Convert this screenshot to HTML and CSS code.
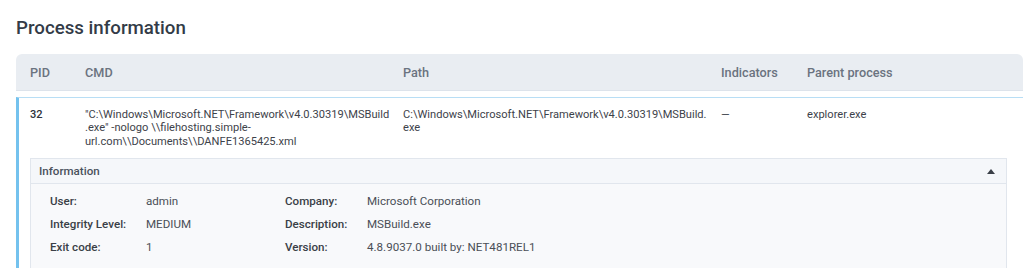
FILE: index.html
```html
<!DOCTYPE html>
<html lang="en">
<head>
  <meta charset="UTF-8">
  <title>Process information</title>
  <link rel="stylesheet" href="styles.css">
</head>
<body>

<h2 class="title">Process information</h2>

<div class="table">
  <div class="thead">
    <div class="cell">PID</div>
    <div class="cell">CMD</div>
    <div class="cell">Path</div>
    <div class="cell">Indicators</div>
    <div class="cell">Parent process</div>
  </div>

  <div class="row">
    <div class="cells">
      <div class="cell pid">32</div>
      <div class="cell">"C:\Windows\Microsoft.NET\Framework\v4.0.30319\MSBuild.exe" -nologo \\filehosting.simple-url.com\\Documents\\DANFE1365425.xml</div>
      <div class="cell">C:\Windows\Microsoft.NET\Framework\v4.0.30319\MSBuild.exe</div>
      <div class="cell">&mdash;</div>
      <div class="cell">explorer.exe</div>
    </div>

    <div class="info">
      <div class="info-head">
        <span>Information</span>
        <span class="caret"></span>
      </div>
      <div class="info-body">
        <div class="label">User:</div>
        <div class="value">admin</div>
        <div class="label">Company:</div>
        <div class="value">Microsoft Corporation</div>

        <div class="label">Integrity Level:</div>
        <div class="value">MEDIUM</div>
        <div class="label">Description:</div>
        <div class="value">MSBuild.exe</div>

        <div class="label">Exit code:</div>
        <div class="value">1</div>
        <div class="label">Version:</div>
        <div class="value">4.8.9037.0 built by: NET481REL1</div>
      </div>
    </div>
  </div>
</div>

</body>
</html>
```

FILE: styles.css
```css
body {
  margin: 0;
  padding: 0 1px 0 16px;
  font-family: Roboto, "Liberation Sans", Arial, sans-serif;
  background: #fff;
  color: #3a3f47;
  overflow: hidden;
}

.title {
  margin: 16px 0 14px;
  font-size: 18.7px;
  font-weight: 500;
  line-height: 24px;
  color: #333b47;
}

.thead,
.cells {
  display: grid;
  grid-template-columns: 55px 318px 318px 86px 1fr;
}

.thead {
  height: 36px;
  align-items: center;
  padding-left: 14px;
  background: #e9edf2;
  border-radius: 6px 6px 0 0;
  border-bottom: 1px solid #dde3eb;
  font-size: 12.7px;
  font-weight: 500;
  color: #6b7380;
}

.row {
  margin-top: 6px;
  border-top: 1px solid #b8def5;
  border-left: 3px solid #74c2ee;
  padding: 0 16px 0 11px;
}

.cells {
  padding: 10px 0 10px;
  font-size: 11.1px;
  line-height: 13.4px;
  color: #3d424a;
}

.cells .cell {
  padding-right: 12px;
  overflow-wrap: break-word;
  min-width: 0;
}

.pid {
  font-weight: 500;
  color: #2f343b;
}

.info {
  border: 1px solid #e1e6ed;
  background: #f8f9fb;
}

.info-head {
  display: flex;
  justify-content: space-between;
  align-items: center;
  height: 24px;
  padding: 0 11px 0 8px;
  border-bottom: 1px solid #e1e6ed;
  background: #f5f7fa;
  font-size: 11.6px;
  font-weight: 500;
  color: #4a515c;
}

.caret {
  width: 0;
  height: 0;
  border-left: 4px solid transparent;
  border-right: 4px solid transparent;
  border-bottom: 5px solid #3a3f47;
}

.info-body {
  display: grid;
  grid-template-columns: 96px 139px 82px 1fr;
  grid-auto-rows: 23px;
  align-items: center;
  padding: 5px 0 10px 19px;
  font-size: 11.6px;
}

.label {
  font-weight: 500;
  color: #3a3f47;
}

.value {
  color: #4a4f57;
}
```
